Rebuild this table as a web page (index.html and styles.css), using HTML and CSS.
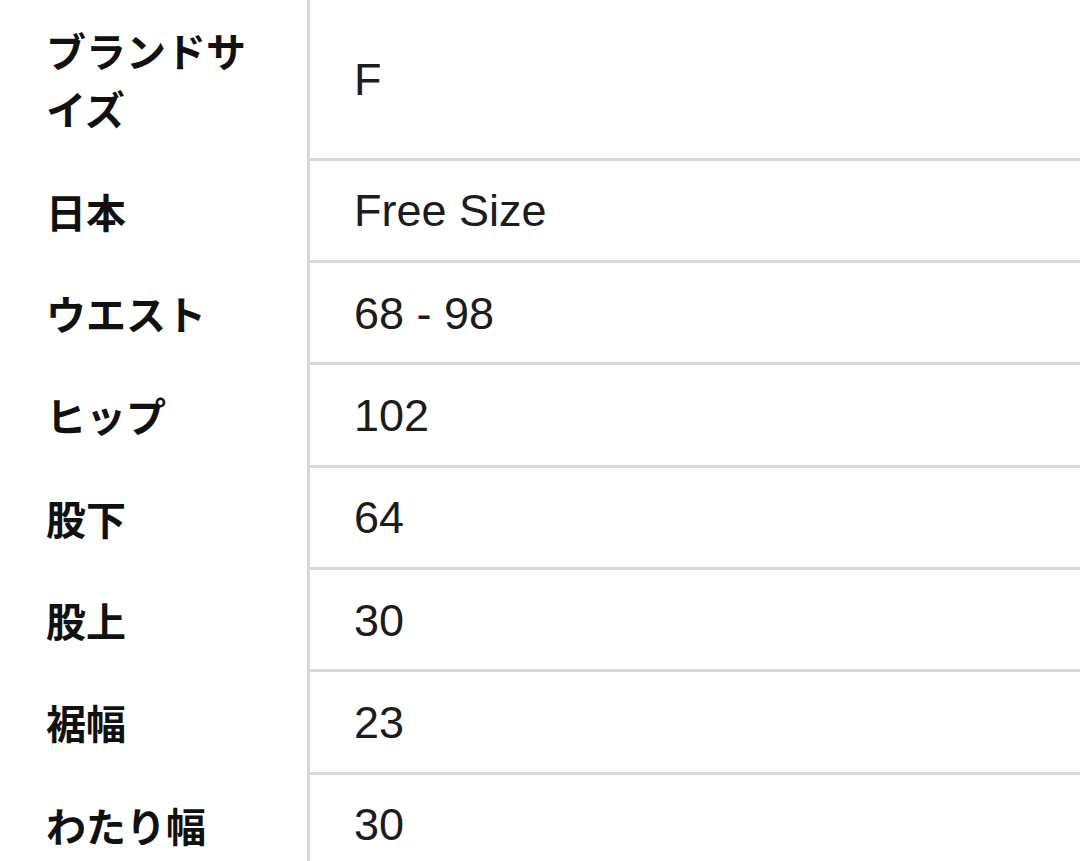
FILE: index.html
```html
<!DOCTYPE html>
<html lang="ja">
<head>
<meta charset="utf-8">
<link rel="stylesheet" href="styles.css">
</head>
<body>
<div class="size-table">
  <div class="row"><div class="label">ブランドサイズ</div><div class="value">F</div></div>
  <div class="row"><div class="label">日本</div><div class="value">Free Size</div></div>
  <div class="row"><div class="label">ウエスト</div><div class="value">68 - 98</div></div>
  <div class="row"><div class="label">ヒップ</div><div class="value">102</div></div>
  <div class="row"><div class="label">股下</div><div class="value">64</div></div>
  <div class="row"><div class="label">股上</div><div class="value">30</div></div>
  <div class="row"><div class="label">裾幅</div><div class="value">23</div></div>
  <div class="row"><div class="label">わたり幅</div><div class="value">30</div></div>
</div>
</body>
</html>
```
FILE: styles.css
```css
html, body {
  margin: 0;
  padding: 0;
  background: #ffffff;
}
.size-table {
  width: 1080px;
  overflow: hidden;
}
.row {
  display: grid;
  grid-template-columns: 310px 1fr;
}
.label {
  padding: 21px 50px 23px 46px;
  border-right: 3px solid #d8d8d8;
  font-family: "Noto Sans CJK JP", sans-serif;
  font-weight: 700;
  font-size: 40px;
  line-height: 58.33px;
  color: #111111;
}
.value {
  display: flex;
  align-items: center;
  padding-left: 44px;
  padding-top: 2px;
  border-bottom: 3px solid #d8d8d8;
  font-family: "Liberation Sans", "Noto Sans CJK JP", sans-serif;
  font-size: 45px;
  color: #1c1c1c;
}
```
